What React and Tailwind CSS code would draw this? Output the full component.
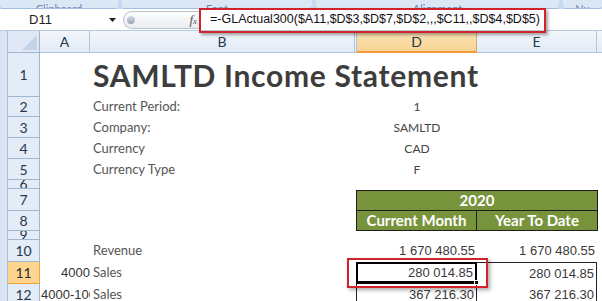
import React from "react";

const cal = { fontFamily: "Lato, 'Open Sans', sans-serif" };
const arial = { fontFamily: "'Liberation Sans', Arial, sans-serif" };

function Row({ h, n, active, clip, a, b, d, e }) {
  return (
    <div className={`flex ${h}`}>
      <div className="w-[8px] shrink-0 bg-[#dae5f3] border-r border-[#a9bfdb]" />
      <div
        className={`w-[32px] shrink-0 flex justify-center overflow-hidden border-b border-r text-[14px] ${
          clip ? "items-end leading-[8px]" : "items-center"
        } ${
          active
            ? "bg-[#ffd58d] border-[#f0a33a] text-[#2d2d2d]"
            : "bg-[#e4ecf7] border-[#9eb6ce] text-[#26384f]"
        }`}
      >
        {n}
      </div>
      <div className="w-[50px] shrink-0 flex items-center justify-end overflow-hidden whitespace-nowrap text-[13px] text-[#333]">
        {a}
      </div>
      <div className="w-[267px] shrink-0 flex items-center pl-[3px] whitespace-nowrap text-[13px] text-[#555]">
        {b}
      </div>
      <div className="w-[120px] shrink-0 flex">{d}</div>
      <div className="w-[120px] shrink-0 flex">{e}</div>
      <div className="flex-1" />
    </div>
  );
}

function Num({ children, cls = "" }) {
  return (
    <div
      className={`flex-1 flex items-center justify-end pr-[2px] text-[13px] text-[#3a3a3a] ${cls}`}
      style={arial}
    >
      {children}
    </div>
  );
}

function Val({ children }) {
  return (
    <div className="flex-1 flex items-center justify-center text-[12px] text-[#444]">
      {children}
    </div>
  );
}

export default function App() {
  return (
    <div
      className="relative w-[602px] h-[301px] overflow-hidden bg-white"
      style={cal}
    >
      {/* ribbon group labels */}
      <div className="flex h-[9px] gap-[4px] bg-[#c6d9f0] overflow-hidden">
        {[
          ["w-[118px]", "Clipboard"],
          ["w-[190px]", "Font"],
          ["w-[243px]", "Alignment"],
          ["flex-1", "Nu"],
        ].map(([w, t]) => (
          <div
            key={t}
            className={`${w} h-[9px] bg-[#dce7f5] border-b border-[#a2bde0] rounded-b-[3px] flex justify-center items-end overflow-hidden`}
          >
            <span className="text-[11px] leading-[11px] translate-y-[6px] text-[#6a86b3]">
              {t}
            </span>
          </div>
        ))}
      </div>

      {/* formula bar */}
      <div className="flex items-center h-[22px] border-b border-[#b6c8de] bg-white">
        <div className="w-[123px] flex items-center h-full">
          <span className="ml-[29px] text-[13px] text-[#222]" style={arial}>
            D11
          </span>
          <svg className="ml-auto mr-[7px]" width="7" height="4" viewBox="0 0 7 4">
            <path d="M0 0H7L3.5 4Z" fill="#222" />
          </svg>
        </div>
        <div className="w-[76px] h-[18px] flex items-center rounded-l-full border border-r-0 border-[#b9c3cf] bg-gradient-to-b from-[#fbfcfd] to-[#e9edf2]">
          <div className="ml-[3px] w-[8px] h-[8px] rounded-full bg-gradient-to-b from-[#d8dde3] to-[#9aa5b1]" />
          <span
            className="ml-auto mr-[2px] text-[13px] italic text-[#555]"
            style={{ fontFamily: "'Liberation Serif', serif" }}
          >
            f<span className="text-[9px]">x</span>
          </span>
        </div>
        <div
          className="flex-1 pl-[11px] text-[12.5px] text-[#111] whitespace-nowrap"
          style={arial}
        >
          =-GLActual300($A11,$D$3,$D$7,$D$2,,,$C11,,$D$4,$D$5)
        </div>
      </div>

      {/* column headers */}
      <div className="flex h-[22px] text-[14px] text-[#26384f]">
        <div className="w-[8px] bg-[#dae5f3] border-r border-[#a9bfdb]" />
        <div className="w-[32px] relative bg-[#dfe8f4] border-r border-b border-[#9eb6ce]">
          <svg className="absolute right-[2px] bottom-[2px]" width="15" height="15" viewBox="0 0 15 15">
            <path d="M15 0V15H0Z" fill="#c5d4e6" />
          </svg>
        </div>
        <div className="w-[50px] flex items-center justify-center bg-gradient-to-b from-[#f2f6fb] to-[#e3ebf6] border-r border-b border-[#b1c5de]">
          A
        </div>
        <div className="w-[267px] flex items-center justify-center bg-gradient-to-b from-[#f2f6fb] to-[#e3ebf6] border-r-[3px] border-double border-b border-[#b1c5de]">
          B
        </div>
        <div className="w-[120px] flex items-center justify-center bg-gradient-to-b from-[#fbe3b4] to-[#f8d594] border-r border-[#c9b07a] border-b-2 border-b-[#f29a3c]">
          D
        </div>
        <div className="w-[120px] flex items-center justify-center bg-gradient-to-b from-[#f2f6fb] to-[#e3ebf6] border-r border-b border-[#b1c5de]">
          E
        </div>
        <div className="flex-1 bg-gradient-to-b from-[#f2f6fb] to-[#e3ebf6] border-b border-[#b1c5de]" />
      </div>

      {/* sheet */}
      <Row
        h="h-[44px]"
        n="1"
        b={
          <span className="text-[30px] tracking-[0.7px] font-bold text-[#3d3d3d] leading-none">
            SAMLTD Income Statement
          </span>
        }
      />
      <Row h="h-[20px]" n="2" b="Current Period:" d={<Val>1</Val>} />
      <Row h="h-[21px]" n="3" b="Company:" d={<Val>SAMLTD</Val>} />
      <Row h="h-[21px]" n="4" b="Currency" d={<Val>CAD</Val>} />
      <Row h="h-[21px]" n="5" b="Currency Type" d={<Val>F</Val>} />
      <Row h="h-[9px]" n="6" clip />
      <Row
        h="h-[22px]"
        n="7"
        d={
          <div className="mt-[1px] w-[242px] -ml-[1px] shrink-0 flex items-center justify-center bg-[#77933c] border border-[#1e1e1e] text-white font-bold text-[15px]">
            2020
          </div>
        }
      />
      <Row
        h="h-[20px]"
        n="8"
        d={
          <div className="flex-1 -ml-[1px] flex items-center justify-center bg-[#77933c] border-l border-r border-b border-[#1e1e1e] text-white font-bold text-[15px]">
            Current Month
          </div>
        }
        e={
          <div className="flex-1 flex items-center justify-center bg-[#77933c] border-r border-b border-[#1e1e1e] text-white font-bold text-[15px] -mr-[1px]">
            Year To Date
          </div>
        }
      />
      <Row h="h-[9px]" n="9" clip />
      <Row
        h="h-[22px]"
        n="10"
        b="Revenue"
        d={<Num>1 670 480.55</Num>}
        e={<Num>1 670 480.55</Num>}
      />
      <Row
        h="h-[22px]"
        n="11"
        active
        a={<span style={arial}>4000</span>}
        b="Sales"
        d={
          <div className="relative flex-1 flex -ml-[1px] border-2 border-b-[3px] border-black">
            <Num cls="pr-[1px]">280 014.85</Num>
            <div className="absolute -right-[4px] -bottom-[4px] w-[5px] h-[5px] bg-black border border-white" />
          </div>
        }
        e={<Num cls="border-t border-r border-[#222]">280 014.85</Num>}
      />
      <Row
        h="h-[22px]"
        n="12"
        a={
          <span className="w-full text-left pl-[1px]" style={arial}>
            4000-1000
          </span>
        }
        b="Sales"
        d={<Num cls="-ml-[1px] border-l border-r border-[#222]">367 216.30</Num>}
        e={<Num cls="border-r border-[#222]">367 216.30</Num>}
      />

      {/* annotations */}
      <div className="absolute left-[199px] top-[8px] w-[347px] h-[25px] border-2 border-[#d0232b] shadow-[2px_2px_3px_rgba(0,0,0,0.35)]" />
      <div className="absolute left-[347px] top-[258px] w-[141px] h-[30px] border-2 border-[#d0232b] shadow-[2px_2px_4px_rgba(0,0,0,0.35)]" />
    </div>
  );
}
